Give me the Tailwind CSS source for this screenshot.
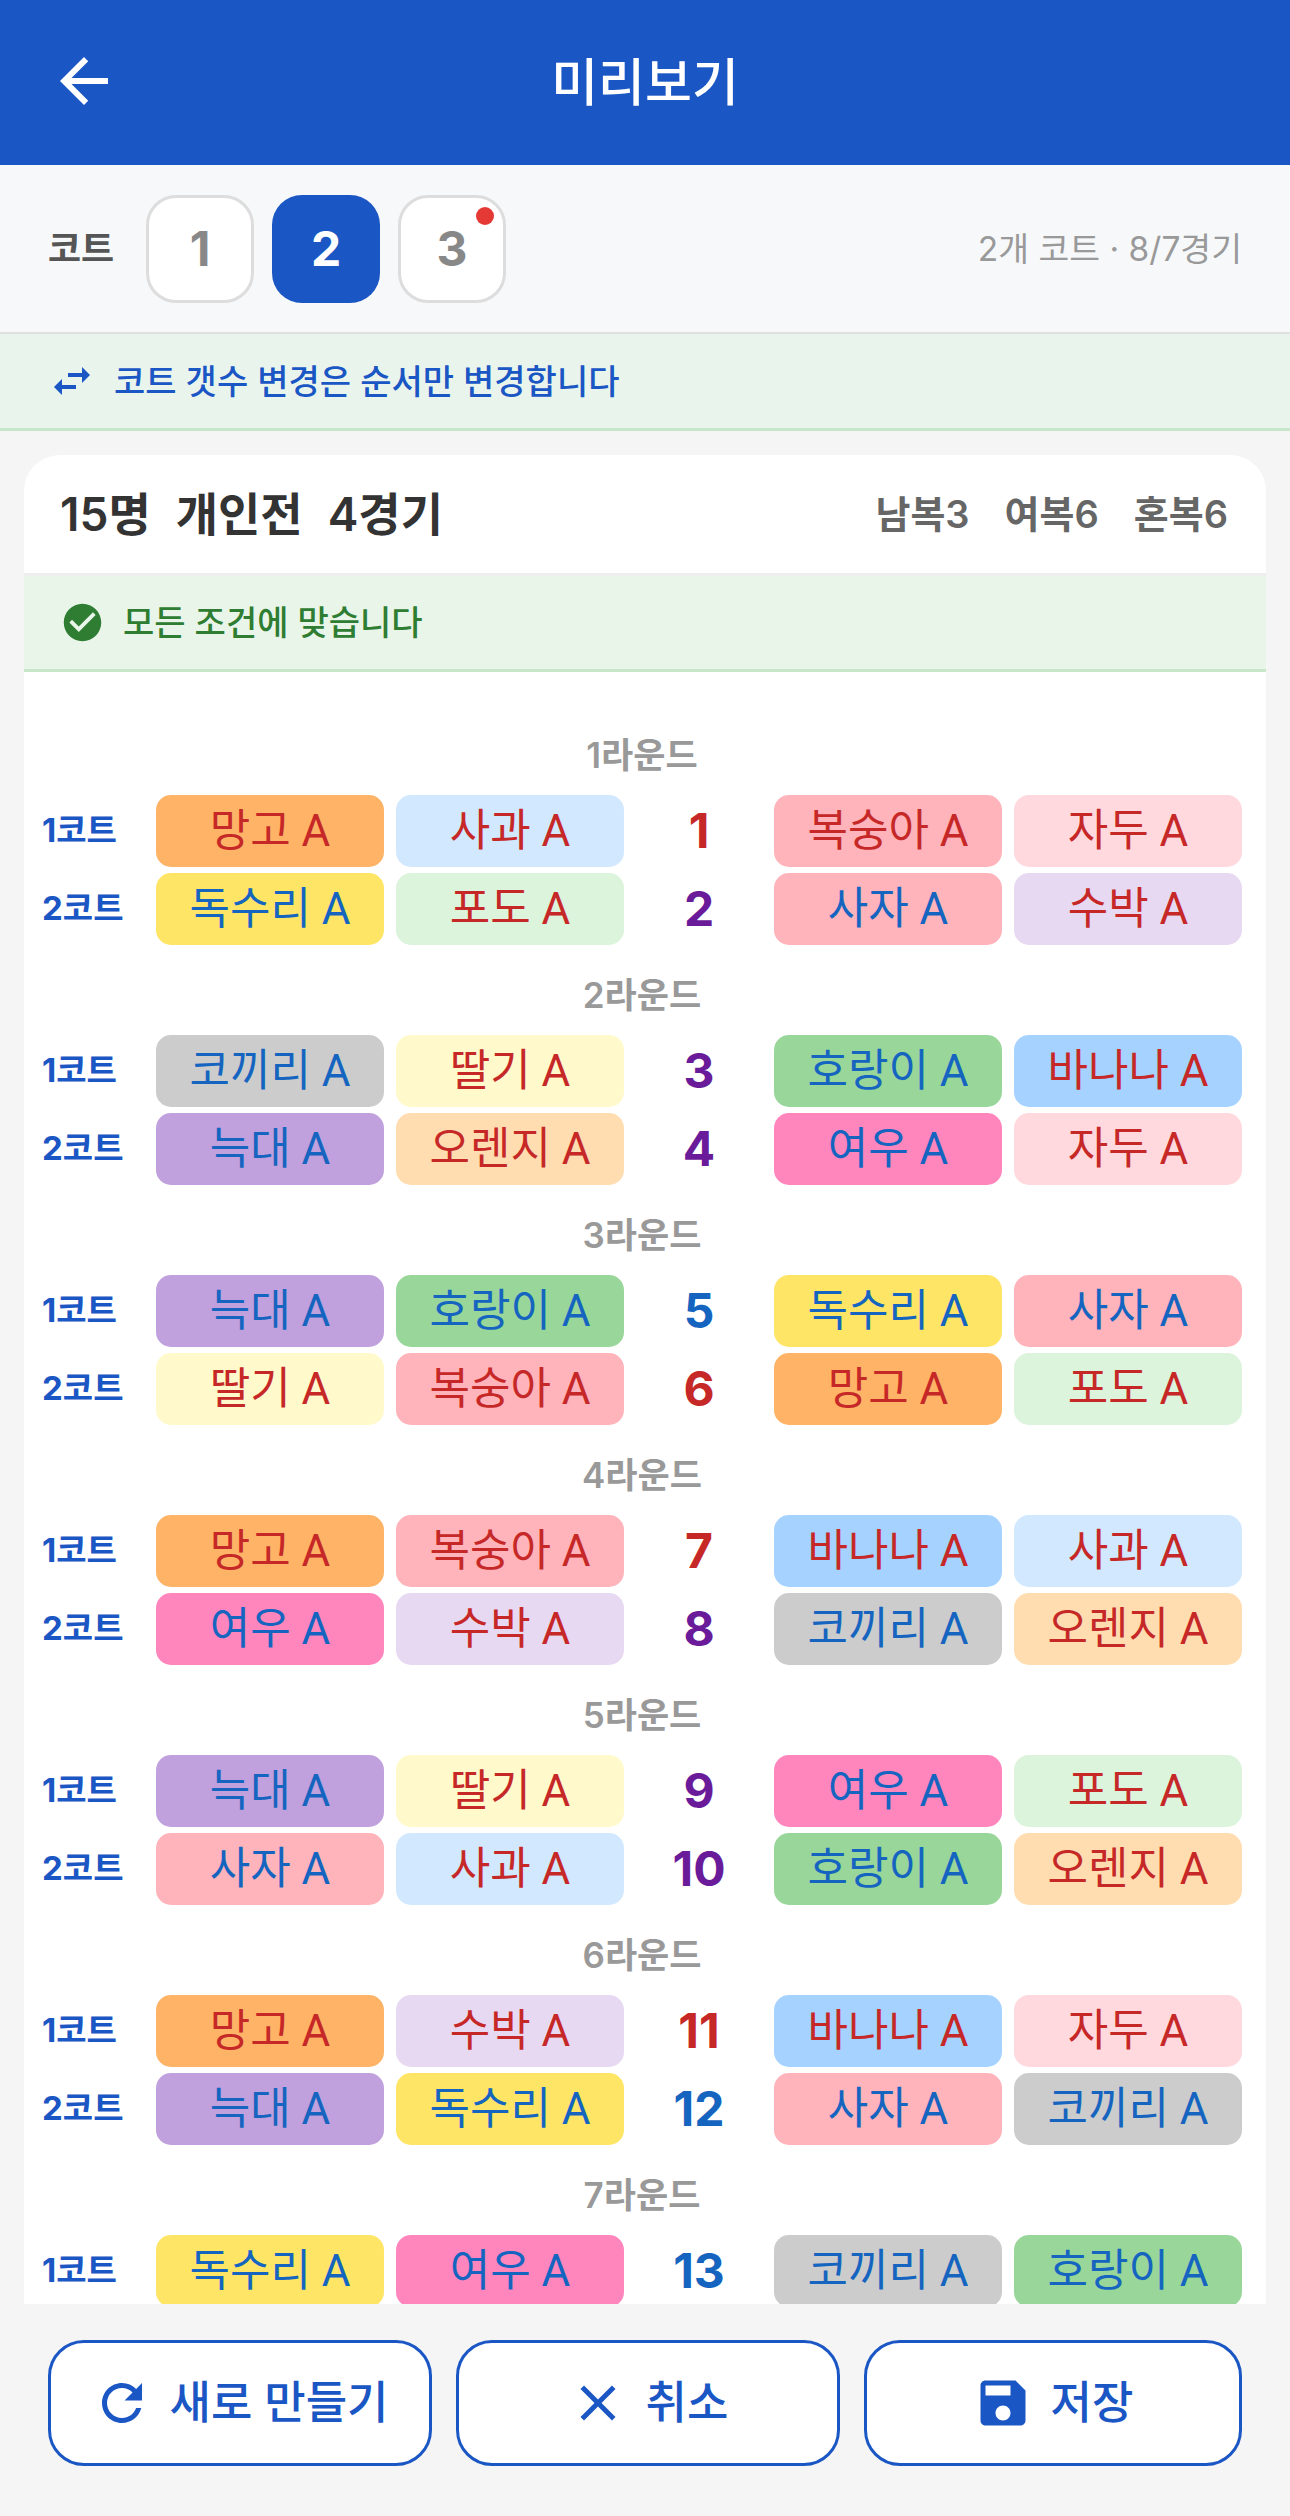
<!DOCTYPE html>
<html lang="ko-KR">
  <head>
    <meta charset="UTF-8" />
    <meta name="viewport" content="width=device-width, initial-scale=1.0" />
    <title>미리보기</title>
    <script src="https://cdn.jsdelivr.net/npm/@tailwindcss/browser@4"></script>
  </head>
  <body class="bg-[#f5f5f5] w-[1290px] h-[2516px] overflow-hidden flex flex-col font-['Inter','Noto_Sans_CJK_KR',sans-serif]">

    <!-- 헤더 -->
    <header class="h-[165px] shrink-0 bg-[#1a56c4] relative flex items-center justify-center text-white">
      <svg class="absolute left-[48px] top-[45px] w-[72px] h-[72px]" viewBox="0 0 24 24" fill="#ffffff"><path d="M20 11H7.83l5.59-5.59L12 4l-8 8 8 8 1.41-1.41L7.83 13H20v-2z"></path></svg>
      <h1 class="text-[51px] font-medium leading-none">미리보기</h1>
    </header>

    <!-- 코트 선택 -->
    <div class="h-[169px] shrink-0 bg-[#f7f8fa] border-b-[2px] border-[#e0e0e0] flex items-center pt-[1px] pl-[48px] pr-[48px]">
      <span class="text-[36px] font-bold text-[#555555] w-[98px]">코트</span>
      <div class="flex gap-[18px]">
        <div class="w-[108px] h-[108px] rounded-[30px] bg-white border-[3px] border-[#dddddd] flex items-center justify-center text-[48px] font-bold text-[#888888]">1</div>
        <div class="w-[108px] h-[108px] rounded-[30px] bg-[#1a56c4] flex items-center justify-center text-[48px] font-bold text-white">2</div>
        <div class="relative w-[108px] h-[108px] rounded-[30px] bg-white border-[3px] border-[#dddddd] flex items-center justify-center text-[48px] font-bold text-[#888888]">
          3
          <span class="absolute right-[9px] top-[9px] w-[18px] h-[18px] rounded-full bg-[#e53935]"></span>
        </div>
      </div>
      <span class="ml-auto text-[33.5px] text-[#999999]">2개 코트 · 8/7경기</span>
    </div>

    <!-- 안내 -->
    <div class="h-[97px] shrink-0 bg-[#e9f5ec] border-b-[3px] border-[#c8e6c9] flex items-center pl-[48px] gap-[18px]">
      <svg class="w-[48px] h-[48px]" viewBox="0 0 24 24" fill="#1a56c4"><path d="M6.99 11L3 15l3.99 4v-3H14v-2H6.99v-3zM21 9l-3.99-4v3H10v2h7.01v3L21 9z"></path></svg>
      <span class="text-[34px] font-medium text-[#1a56c4]">코트 갯수 변경은 순서만 변경합니다</span>
    </div>

    <!-- 결과 카드 -->
    <main class="h-[1873px] shrink-0 overflow-hidden pt-[24px] px-[24px]">
      <div class="bg-white rounded-t-[36px] h-full overflow-hidden">
        <div class="h-[118px] flex items-center justify-between pl-[36px] pr-[38px]">
          <div class="flex gap-[25px] text-[46px] font-semibold text-[#333333]">
            <span>15명</span><span>개인전</span><span>4경기</span>
          </div>
          <div class="flex gap-[35px] text-[38px] font-semibold text-[#666666]">
            <span>남복3</span><span>여복6</span><span>혼복6</span>
          </div>
        </div>
        <div class="h-[99px] bg-[#eaf5ea] border-t-[3px] border-t-[#eeeeee] border-b-[3px] border-b-[#c8e6c9] flex items-center pl-[36px] gap-[18px]">
          <svg class="w-[45px] h-[45px]" viewBox="0 0 24 24" fill="#2e7d32"><path d="M12 2C6.48 2 2 6.48 2 12s4.48 10 10 10 10-4.48 10-10S17.52 2 12 2zm-2 15l-5-5 1.41-1.41L10 14.17l7.59-7.59L19 8l-9 9z"></path></svg>
          <span class="text-[34px] font-medium text-[#2e7d32]">모든 조건에 맞습니다</span>
        </div>

        <!-- 이름 칩은 Roboto -->
        <div class="pt-[48px] pl-[18px] pr-[24px] flex flex-col gap-[15px] [&>section>div>div>div]:font-['Roboto','Noto_Sans_CJK_KR',sans-serif]">

          <!-- 1라운드 -->
          <section>
            <p class="h-[66px] text-center text-[35px] font-semibold text-[#999999] leading-[70px]">1라운드</p>
            <div class="flex flex-col gap-[6px] mt-[9px]">
              <div class="flex items-center">
                <span class="w-[114px] text-[33px] font-bold text-[#1a56c4]">1코트</span>
                <div class="w-[228px] h-[72px] rounded-[15px] bg-[#ffb366] flex items-center justify-center text-[44px] text-[#c62828]">망고 A</div>
                <div class="w-[228px] h-[72px] rounded-[15px] bg-[#d1e8ff] ml-[12px] flex items-center justify-center text-[44px] text-[#c62828]">사과 A</div>
                <span class="w-[150px] text-center text-[48px] font-bold text-[#c62828]">1</span>
                <div class="w-[228px] h-[72px] rounded-[15px] bg-[#ffb3ba] flex items-center justify-center text-[44px] text-[#c62828]">복숭아 A</div>
                <div class="w-[228px] h-[72px] rounded-[15px] bg-[#ffd9de] ml-[12px] flex items-center justify-center text-[44px] text-[#c62828]">자두 A</div>
              </div>
              <div class="flex items-center">
                <span class="w-[114px] text-[33px] font-bold text-[#1a56c4]">2코트</span>
                <div class="w-[228px] h-[72px] rounded-[15px] bg-[#ffe566] flex items-center justify-center text-[44px] text-[#1565c0]">독수리 A</div>
                <div class="w-[228px] h-[72px] rounded-[15px] bg-[#dcf3dc] ml-[12px] flex items-center justify-center text-[44px] text-[#c62828]">포도 A</div>
                <span class="w-[150px] text-center text-[48px] font-bold text-[#6a1b9a]">2</span>
                <div class="w-[228px] h-[72px] rounded-[15px] bg-[#ffb3ba] flex items-center justify-center text-[44px] text-[#1565c0]">사자 A</div>
                <div class="w-[228px] h-[72px] rounded-[15px] bg-[#e8d9f3] ml-[12px] flex items-center justify-center text-[44px] text-[#c62828]">수박 A</div>
              </div>
            </div>
          </section>

          <!-- 2라운드 -->
          <section>
            <p class="h-[66px] text-center text-[35px] font-semibold text-[#999999] leading-[70px]">2라운드</p>
            <div class="flex flex-col gap-[6px] mt-[9px]">
              <div class="flex items-center">
                <span class="w-[114px] text-[33px] font-bold text-[#1a56c4]">1코트</span>
                <div class="w-[228px] h-[72px] rounded-[15px] bg-[#cccccc] flex items-center justify-center text-[44px] text-[#1565c0]">코끼리 A</div>
                <div class="w-[228px] h-[72px] rounded-[15px] bg-[#fff9cc] ml-[12px] flex items-center justify-center text-[44px] text-[#c62828]">딸기 A</div>
                <span class="w-[150px] text-center text-[48px] font-bold text-[#6a1b9a]">3</span>
                <div class="w-[228px] h-[72px] rounded-[15px] bg-[#99d699] flex items-center justify-center text-[44px] text-[#1565c0]">호랑이 A</div>
                <div class="w-[228px] h-[72px] rounded-[15px] bg-[#a6d2ff] ml-[12px] flex items-center justify-center text-[44px] text-[#c62828]">바나나 A</div>
              </div>
              <div class="flex items-center">
                <span class="w-[114px] text-[33px] font-bold text-[#1a56c4]">2코트</span>
                <div class="w-[228px] h-[72px] rounded-[15px] bg-[#c0a0dd] flex items-center justify-center text-[44px] text-[#1565c0]">늑대 A</div>
                <div class="w-[228px] h-[72px] rounded-[15px] bg-[#ffddb0] ml-[12px] flex items-center justify-center text-[44px] text-[#c62828]">오렌지 A</div>
                <span class="w-[150px] text-center text-[48px] font-bold text-[#6a1b9a]">4</span>
                <div class="w-[228px] h-[72px] rounded-[15px] bg-[#ff85bd] flex items-center justify-center text-[44px] text-[#1565c0]">여우 A</div>
                <div class="w-[228px] h-[72px] rounded-[15px] bg-[#ffd9de] ml-[12px] flex items-center justify-center text-[44px] text-[#c62828]">자두 A</div>
              </div>
            </div>
          </section>

          <!-- 3라운드 -->
          <section>
            <p class="h-[66px] text-center text-[35px] font-semibold text-[#999999] leading-[70px]">3라운드</p>
            <div class="flex flex-col gap-[6px] mt-[9px]">
              <div class="flex items-center">
                <span class="w-[114px] text-[33px] font-bold text-[#1a56c4]">1코트</span>
                <div class="w-[228px] h-[72px] rounded-[15px] bg-[#c0a0dd] flex items-center justify-center text-[44px] text-[#1565c0]">늑대 A</div>
                <div class="w-[228px] h-[72px] rounded-[15px] bg-[#99d699] ml-[12px] flex items-center justify-center text-[44px] text-[#1565c0]">호랑이 A</div>
                <span class="w-[150px] text-center text-[48px] font-bold text-[#1565c0]">5</span>
                <div class="w-[228px] h-[72px] rounded-[15px] bg-[#ffe566] flex items-center justify-center text-[44px] text-[#1565c0]">독수리 A</div>
                <div class="w-[228px] h-[72px] rounded-[15px] bg-[#ffb3ba] ml-[12px] flex items-center justify-center text-[44px] text-[#1565c0]">사자 A</div>
              </div>
              <div class="flex items-center">
                <span class="w-[114px] text-[33px] font-bold text-[#1a56c4]">2코트</span>
                <div class="w-[228px] h-[72px] rounded-[15px] bg-[#fff9cc] flex items-center justify-center text-[44px] text-[#c62828]">딸기 A</div>
                <div class="w-[228px] h-[72px] rounded-[15px] bg-[#ffb3ba] ml-[12px] flex items-center justify-center text-[44px] text-[#c62828]">복숭아 A</div>
                <span class="w-[150px] text-center text-[48px] font-bold text-[#c62828]">6</span>
                <div class="w-[228px] h-[72px] rounded-[15px] bg-[#ffb366] flex items-center justify-center text-[44px] text-[#c62828]">망고 A</div>
                <div class="w-[228px] h-[72px] rounded-[15px] bg-[#dcf3dc] ml-[12px] flex items-center justify-center text-[44px] text-[#c62828]">포도 A</div>
              </div>
            </div>
          </section>

          <!-- 4라운드 -->
          <section>
            <p class="h-[66px] text-center text-[35px] font-semibold text-[#999999] leading-[70px]">4라운드</p>
            <div class="flex flex-col gap-[6px] mt-[9px]">
              <div class="flex items-center">
                <span class="w-[114px] text-[33px] font-bold text-[#1a56c4]">1코트</span>
                <div class="w-[228px] h-[72px] rounded-[15px] bg-[#ffb366] flex items-center justify-center text-[44px] text-[#c62828]">망고 A</div>
                <div class="w-[228px] h-[72px] rounded-[15px] bg-[#ffb3ba] ml-[12px] flex items-center justify-center text-[44px] text-[#c62828]">복숭아 A</div>
                <span class="w-[150px] text-center text-[48px] font-bold text-[#c62828]">7</span>
                <div class="w-[228px] h-[72px] rounded-[15px] bg-[#a6d2ff] flex items-center justify-center text-[44px] text-[#c62828]">바나나 A</div>
                <div class="w-[228px] h-[72px] rounded-[15px] bg-[#d1e8ff] ml-[12px] flex items-center justify-center text-[44px] text-[#c62828]">사과 A</div>
              </div>
              <div class="flex items-center">
                <span class="w-[114px] text-[33px] font-bold text-[#1a56c4]">2코트</span>
                <div class="w-[228px] h-[72px] rounded-[15px] bg-[#ff85bd] flex items-center justify-center text-[44px] text-[#1565c0]">여우 A</div>
                <div class="w-[228px] h-[72px] rounded-[15px] bg-[#e8d9f3] ml-[12px] flex items-center justify-center text-[44px] text-[#c62828]">수박 A</div>
                <span class="w-[150px] text-center text-[48px] font-bold text-[#6a1b9a]">8</span>
                <div class="w-[228px] h-[72px] rounded-[15px] bg-[#cccccc] flex items-center justify-center text-[44px] text-[#1565c0]">코끼리 A</div>
                <div class="w-[228px] h-[72px] rounded-[15px] bg-[#ffddb0] ml-[12px] flex items-center justify-center text-[44px] text-[#c62828]">오렌지 A</div>
              </div>
            </div>
          </section>

          <!-- 5라운드 -->
          <section>
            <p class="h-[66px] text-center text-[35px] font-semibold text-[#999999] leading-[70px]">5라운드</p>
            <div class="flex flex-col gap-[6px] mt-[9px]">
              <div class="flex items-center">
                <span class="w-[114px] text-[33px] font-bold text-[#1a56c4]">1코트</span>
                <div class="w-[228px] h-[72px] rounded-[15px] bg-[#c0a0dd] flex items-center justify-center text-[44px] text-[#1565c0]">늑대 A</div>
                <div class="w-[228px] h-[72px] rounded-[15px] bg-[#fff9cc] ml-[12px] flex items-center justify-center text-[44px] text-[#c62828]">딸기 A</div>
                <span class="w-[150px] text-center text-[48px] font-bold text-[#6a1b9a]">9</span>
                <div class="w-[228px] h-[72px] rounded-[15px] bg-[#ff85bd] flex items-center justify-center text-[44px] text-[#1565c0]">여우 A</div>
                <div class="w-[228px] h-[72px] rounded-[15px] bg-[#dcf3dc] ml-[12px] flex items-center justify-center text-[44px] text-[#c62828]">포도 A</div>
              </div>
              <div class="flex items-center">
                <span class="w-[114px] text-[33px] font-bold text-[#1a56c4]">2코트</span>
                <div class="w-[228px] h-[72px] rounded-[15px] bg-[#ffb3ba] flex items-center justify-center text-[44px] text-[#1565c0]">사자 A</div>
                <div class="w-[228px] h-[72px] rounded-[15px] bg-[#d1e8ff] ml-[12px] flex items-center justify-center text-[44px] text-[#c62828]">사과 A</div>
                <span class="w-[150px] text-center text-[48px] font-bold text-[#6a1b9a]">10</span>
                <div class="w-[228px] h-[72px] rounded-[15px] bg-[#99d699] flex items-center justify-center text-[44px] text-[#1565c0]">호랑이 A</div>
                <div class="w-[228px] h-[72px] rounded-[15px] bg-[#ffddb0] ml-[12px] flex items-center justify-center text-[44px] text-[#c62828]">오렌지 A</div>
              </div>
            </div>
          </section>

          <!-- 6라운드 -->
          <section>
            <p class="h-[66px] text-center text-[35px] font-semibold text-[#999999] leading-[70px]">6라운드</p>
            <div class="flex flex-col gap-[6px] mt-[9px]">
              <div class="flex items-center">
                <span class="w-[114px] text-[33px] font-bold text-[#1a56c4]">1코트</span>
                <div class="w-[228px] h-[72px] rounded-[15px] bg-[#ffb366] flex items-center justify-center text-[44px] text-[#c62828]">망고 A</div>
                <div class="w-[228px] h-[72px] rounded-[15px] bg-[#e8d9f3] ml-[12px] flex items-center justify-center text-[44px] text-[#c62828]">수박 A</div>
                <span class="w-[150px] text-center text-[48px] font-bold text-[#c62828]">11</span>
                <div class="w-[228px] h-[72px] rounded-[15px] bg-[#a6d2ff] flex items-center justify-center text-[44px] text-[#c62828]">바나나 A</div>
                <div class="w-[228px] h-[72px] rounded-[15px] bg-[#ffd9de] ml-[12px] flex items-center justify-center text-[44px] text-[#c62828]">자두 A</div>
              </div>
              <div class="flex items-center">
                <span class="w-[114px] text-[33px] font-bold text-[#1a56c4]">2코트</span>
                <div class="w-[228px] h-[72px] rounded-[15px] bg-[#c0a0dd] flex items-center justify-center text-[44px] text-[#1565c0]">늑대 A</div>
                <div class="w-[228px] h-[72px] rounded-[15px] bg-[#ffe566] ml-[12px] flex items-center justify-center text-[44px] text-[#1565c0]">독수리 A</div>
                <span class="w-[150px] text-center text-[48px] font-bold text-[#1565c0]">12</span>
                <div class="w-[228px] h-[72px] rounded-[15px] bg-[#ffb3ba] flex items-center justify-center text-[44px] text-[#1565c0]">사자 A</div>
                <div class="w-[228px] h-[72px] rounded-[15px] bg-[#cccccc] ml-[12px] flex items-center justify-center text-[44px] text-[#1565c0]">코끼리 A</div>
              </div>
            </div>
          </section>

          <!-- 7라운드 -->
          <section>
            <p class="h-[66px] text-center text-[35px] font-semibold text-[#999999] leading-[70px]">7라운드</p>
            <div class="flex flex-col gap-[6px] mt-[9px]">
              <div class="flex items-center">
                <span class="w-[114px] text-[33px] font-bold text-[#1a56c4]">1코트</span>
                <div class="w-[228px] h-[72px] rounded-[15px] bg-[#ffe566] flex items-center justify-center text-[44px] text-[#1565c0]">독수리 A</div>
                <div class="w-[228px] h-[72px] rounded-[15px] bg-[#ff85bd] ml-[12px] flex items-center justify-center text-[44px] text-[#1565c0]">여우 A</div>
                <span class="w-[150px] text-center text-[48px] font-bold text-[#1565c0]">13</span>
                <div class="w-[228px] h-[72px] rounded-[15px] bg-[#cccccc] flex items-center justify-center text-[44px] text-[#1565c0]">코끼리 A</div>
                <div class="w-[228px] h-[72px] rounded-[15px] bg-[#99d699] ml-[12px] flex items-center justify-center text-[44px] text-[#1565c0]">호랑이 A</div>
              </div>
            </div>
          </section>
        </div>
      </div>
    </main>

    <!-- 하단 버튼 -->
    <footer class="flex-1 flex gap-[24px] pt-[36px] pl-[48px]">
      <button class="w-[384px] h-[126px] rounded-[36px] bg-white border-[3px] border-[#1a56c4] flex items-center justify-center gap-[18px] text-[#1a56c4] text-[45px] font-medium">
        <svg class="w-[60px] h-[60px]" viewBox="0 0 24 24" fill="#1a56c4"><path d="M17.65 6.35C16.2 4.9 14.21 4 12 4c-4.42 0-7.99 3.58-7.99 8s3.57 8 7.99 8c3.73 0 6.84-2.55 7.73-6h-2.08c-.82 2.33-3.04 4-5.65 4-3.31 0-6-2.69-6-6s2.69-6 6-6c1.66 0 3.14.69 4.22 1.78L13 11h7V4l-2.35 2.35z"></path></svg>
        새로 만들기
      </button>
      <button class="w-[384px] h-[126px] rounded-[36px] bg-white border-[3px] border-[#1a56c4] flex items-center justify-center gap-[18px] text-[#1a56c4] text-[45px] font-medium">
        <svg class="w-[60px] h-[60px]" viewBox="0 0 24 24" fill="#1a56c4"><path d="M19 6.41L17.59 5 12 10.59 6.41 5 5 6.41 10.59 12 5 17.59 6.41 19 12 13.41 17.59 19 19 17.59 13.41 12z"></path></svg>
        취소
      </button>
      <button class="w-[378px] h-[126px] rounded-[36px] bg-white border-[3px] border-[#1a56c4] flex items-center justify-center gap-[18px] text-[#1a56c4] text-[45px] font-medium">
        <svg class="w-[60px] h-[60px]" viewBox="0 0 24 24" fill="#1a56c4"><path d="M17 3H5c-1.11 0-2 .9-2 2v14c0 1.1.89 2 2 2h14c1.1 0 2-.9 2-2V7l-4-4zm-5 16c-1.66 0-3-1.34-3-3s1.34-3 3-3 3 1.34 3 3-1.34 3-3 3zm3-10H5V5h10v4z"></path></svg>
        저장
      </button>
    </footer>
  </body>
</html>
